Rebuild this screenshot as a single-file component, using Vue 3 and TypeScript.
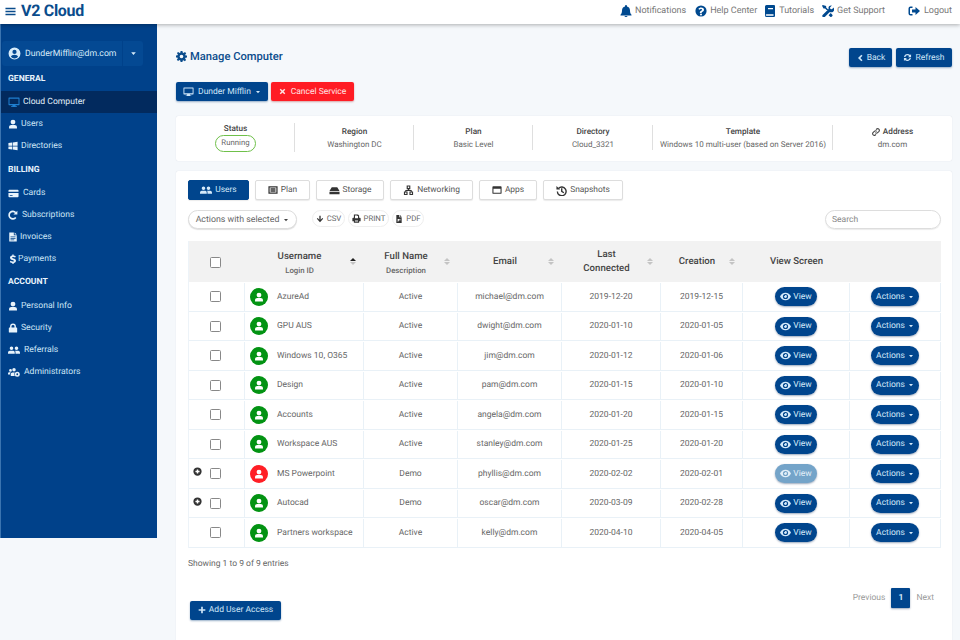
<script setup lang="ts">
import { h } from 'vue'
import type { FunctionalComponent } from 'vue'

const Ic: FunctionalComponent<{ n: string; s?: number }> = (p) =>
  h('svg', { width: p.s ?? 10, height: p.s ?? 10, viewBox: '0 0 24 24', fill: 'currentColor', style: 'flex:none' }, [
    h('use', { href: '#i-' + p.n }),
  ])

const nav = [
  { head: 'GENERAL', y: 'h1', items: [
    { t: 'Cloud Computer', i: 'desktop', s: 12, w: 15, active: true },
    { t: 'Users', i: 'user', s: 10, w: 13 },
    { t: 'Directories', i: 'windows', s: 10, w: 13 },
  ] },
  { head: 'BILLING', y: 'h2', items: [
    { t: 'Cards', i: 'card', s: 11, w: 15 },
    { t: 'Subscriptions', i: 'redo', s: 10, w: 14 },
    { t: 'Invoices', i: 'file', s: 10, w: 12 },
    { t: 'Payments', i: 'dollar', s: 10, w: 10 },
  ] },
  { head: 'ACCOUNT', y: 'h3', items: [
    { t: 'Personal Info', i: 'user', s: 10, w: 13 },
    { t: 'Security', i: 'lock', s: 10, w: 13 },
    { t: 'Referrals', i: 'users', s: 12, w: 16 },
    { t: 'Administrators', i: 'userscog', s: 12, w: 16 },
  ] },
]

const topLinks = [
  { t: 'Notifications', i: 'bell', s: 12 },
  { t: 'Help Center', i: 'question', s: 12 },
  { t: 'Tutorials', i: 'book', s: 12 },
  { t: 'Get Support', i: 'tools', s: 12 },
]

const info = [
  { l: 'Region', v: 'Washington DC' },
  { l: 'Plan', v: 'Basic Level' },
  { l: 'Directory', v: 'Cloud_3321' },
  { l: 'Template', v: 'Windows 10 multi-user (based on Server 2016)' },
]

const tabs = [
  { t: 'Users', i: 'users', w: 61, s: 12, on: true },
  { t: 'Plan', i: 'plan', w: 55, s: 10 },
  { t: 'Storage', i: 'hdd', w: 68, s: 11 },
  { t: 'Networking', i: 'network', w: 83, s: 11 },
  { t: 'Apps', i: 'window', w: 58, s: 10 },
  { t: 'Snapshots', i: 'history', w: 80, s: 11 },
]

const rows = [
  { n: 'AzureAd', d: 'Active', e: 'michael@dm.com', l: '2019-12-20', c: '2019-12-15' },
  { n: 'GPU AUS', d: 'Active', e: 'dwight@dm.com', l: '2020-01-10', c: '2020-01-05' },
  { n: 'Windows 10, O365', d: 'Active', e: 'jim@dm.com', l: '2020-01-12', c: '2020-01-06' },
  { n: 'Design', d: 'Active', e: 'pam@dm.com', l: '2020-01-15', c: '2020-01-10' },
  { n: 'Accounts', d: 'Active', e: 'angela@dm.com', l: '2020-01-20', c: '2020-01-15' },
  { n: 'Workspace AUS', d: 'Active', e: 'stanley@dm.com', l: '2020-01-25', c: '2020-01-20' },
  { n: 'MS Powerpoint', d: 'Demo', e: 'phyllis@dm.com', l: '2020-02-02', c: '2020-02-01', plus: true, off: true },
  { n: 'Autocad', d: 'Demo', e: 'oscar@dm.com', l: '2020-03-09', c: '2020-02-28', plus: true },
  { n: 'Partners workspace', d: 'Active', e: 'kelly@dm.com', l: '2020-04-10', c: '2020-04-05' },
]
</script>

<template>
  <div class="app">
    <svg class="sprite" aria-hidden="true">
      <symbol id="i-menu" viewBox="0 0 24 24"><path d="M1 4h22v3H1zM1 10.500h22v3H1zM1 17h22v3H1z" /></symbol>
      <symbol id="i-usercircle" viewBox="0 0 24 24"><path fill-rule="evenodd" d="M12 1a11 11 0 100 22 11 11 0 000-22zm0 4.200a3.900 3.900 0 110 7.800 3.900 3.900 0 010-7.800zM5.400 18.200c.8-2.800 3-4 6.600-4s5.800 1.200 6.600 4A8.900 8.900 0 0112 21a8.900 8.900 0 01-6.600-2.800z" /></symbol>
      <symbol id="i-caret" viewBox="0 0 24 24"><path d="M4 8h16l-8 9z" /></symbol>
      <symbol id="i-desktop" viewBox="0 0 24 24"><path fill-rule="evenodd" d="M2 3h20a1.500 1.500 0 011 1.500V17a1.500 1.500 0 01-1 1.500h-7l.5 2H18V22H6v-1.500h2.500l.5-2H2a1.500 1.500 0 01-1-1.500V4.500A1.500 1.500 0 012 3zm1 2.500V16h18V5.500z" /></symbol>
      <symbol id="i-user" viewBox="0 0 24 24"><path d="M12 1.500a5.800 5.800 0 110 11.600 5.800 5.800 0 010-11.600zM2.500 22.500v-2.700c0-3.200 2.500-5.300 5.300-5.300h8.400c2.800 0 5.300 2.100 5.300 5.300v2.700z" /></symbol>
      <symbol id="i-windows" viewBox="0 0 24 24"><path d="M1 5l9-1.300v7.800H1zM11.500 3.500L23 2v9.500H11.500zM1 13h9v7.300L1 19zM11.500 13H23v9l-11.500-1.600z" /></symbol>
      <symbol id="i-card" viewBox="0 0 24 24"><path d="M3 4h18a2 2 0 012 2v2H1V6a2 2 0 012-2zM1 11h22v7a2 2 0 01-2 2H3a2 2 0 01-2-2zm3 4v2h6v-2z" fill-rule="evenodd" /></symbol>
      <symbol id="i-redo" viewBox="0 0 24 24"><path d="M18.500 6.500A9 9 0 1018.700 18" fill="none" stroke="currentColor" stroke-width="4" /><path d="M22.500 1.500v9.500h-9.500z" /></symbol>
      <symbol id="i-file" viewBox="0 0 24 24"><path fill-rule="evenodd" d="M3 1h11v7h7v15H3zm13 0l5 5h-5zM6 11v1.500h12V11zm0 3.500V16h12v-1.500zM6 18v1.500h9V18z" /></symbol>
      <symbol id="i-dollar" viewBox="0 0 24 24"><path d="M10.500 1h3v2.600c2.300.3 4 1.100 5.300 2l-1.500 2.800C15.900 7.500 14.300 7 12.400 7c-1.800 0-2.700.6-2.700 1.500 0 1 1 1.400 3.400 2.100 3.600 1 6.100 2.300 6.100 5.600 0 2.800-2.100 4.700-5.700 5.200V24h-3v-2.500c-2.600-.2-4.700-1.200-6.200-2.400l1.700-2.800c1.600 1.200 3.500 1.900 5.300 1.900 2 0 3-.6 3-1.700s-1.100-1.600-3.700-2.300c-3.300-1-5.800-2.200-5.800-5.400 0-2.700 2.100-4.600 5.400-5.100z" /></symbol>
      <symbol id="i-lock" viewBox="0 0 24 24"><path fill-rule="evenodd" d="M12 1a7 7 0 017 7v3h1.500a1.500 1.500 0 011.500 1.500v9a1.500 1.500 0 01-1.500 1.500h-17A1.500 1.500 0 012 21.500v-9A1.500 1.500 0 013.500 11H5V8a7 7 0 017-7zm0 3.500A3.500 3.500 0 008.500 8v3h7V8A3.500 3.500 0 0012 4.500z" /></symbol>
      <symbol id="i-users" viewBox="0 0 24 24"><path d="M7 5a3.600 3.600 0 110 7.200A3.600 3.600 0 017 5zM17 5a3.600 3.600 0 110 7.200A3.600 3.600 0 0117 5zM0 19.500v-2.200c0-2 1.600-3.700 3.500-3.700h7c1.900 0 3 1.700 3 3.700v2.200zM15 19.500v-2.400c0-1.300-.3-2.500-1-3.500h6.500c2 0 3.500 1.700 3.500 3.700v2.200z" /></symbol>
      <symbol id="i-userscog" viewBox="0 0 24 24"><path d="M5 6a2.800 2.800 0 110 5.600A2.800 2.800 0 015 6zM12 4a3.500 3.500 0 110 7 3.500 3.500 0 010-7zM0 17v-1.800c0-1.600 1.300-2.700 3-2.700h2.500c-.8.900-1.300 2-1.300 3.200V17zM5.500 20v-3.500c0-2 1.500-3.500 3.500-3.500h4.600a6 6 0 000 7z" /><circle cx="18.500" cy="16.500" r="5" /><circle cx="18.500" cy="16.500" r="1.800" fill="#00418a" /></symbol>
      <symbol id="i-bell" viewBox="0 0 24 24"><path d="M12 0a2 2 0 012 2v1.200c3.500.8 6 3.900 6 7.800 0 5 1.400 6.600 3 8.300V21H1v-1.700c1.600-1.700 3-3.300 3-8.300 0-3.900 2.500-7 6-7.800V2a2 2 0 012-2zM9 22h6a3 2 0 01-6 0z" /></symbol>
      <symbol id="i-question" viewBox="0 0 24 24"><path fill-rule="evenodd" d="M12 .8a11.200 11.200 0 110 22.400A11.200 11.200 0 0112 .8zM12.300 5c-2.600 0-4.300 1.100-5.500 3l2.200 1.600c.7-1 1.500-1.600 3-1.600 1.200 0 2.200.6 2.200 1.600 0 1-.8 1.400-1.900 2-1.300.7-2.600 1.500-2.600 3.500v.9h3.600v-.6c0-.8.600-1.200 1.700-1.800 1.600-.9 3-1.900 3-4C18 6.800 15.200 5 12.300 5zM12 17a2 2 0 100 4 2 2 0 000-4z" /></symbol>
      <symbol id="i-book" viewBox="0 0 24 24"><path fill-rule="evenodd" d="M5 0h15a2 2 0 012 2v20a2 2 0 01-2 2H5a3 3 0 01-3-3V3a3 3 0 013-3zm3 6v2.500h10V6zM5 18.500A1.500 1.500 0 005 21.500h14v-3z" /></symbol>
      <symbol id="i-tools" viewBox="0 0 24 24"><path d="M1.500 0L0 1.500l3 5.500h3.200l5 5 2.100-2.100-5-5V1.800zM23.500 5l-3.700 3.700-3-.8-.8-3L19.700 1c-3-.9-6.300.9-6.700 4.100-.1 1 0 1.900.3 2.700L1.200 19.900a3 3 0 004.200 4.200l9.600-9.600 2.600-.2c.9.300 1.800.4 2.800.2 3-.6 4.700-3.900 3.400-7.500zM17.500 16.200l-4.300 4.300 2.700 2.700a2.700 2.700 0 003.800 0l.5-.5a2.700 2.700 0 000-3.800z" /></symbol>
      <symbol id="i-signout" viewBox="0 0 24 24"><path d="M9 3H5a4 4 0 00-4 4v10a4 4 0 004 4h4v-3H5a1 1 0 01-1-1V7a1 1 0 011-1h4z" /><path d="M15 4l9 8-9 8v-5H8V9h7z" /></symbol>
      <symbol id="i-chevron" viewBox="0 0 24 24"><path d="M16 2l3.500 3.500L13 12l6.500 6.500L16 22 6 12z" /></symbol>
      <symbol id="i-sync" viewBox="0 0 24 24"><path d="M12 2.500c2.700 0 5.100 1.100 6.900 2.900L21.500 3v8h-8l3-3a6 6 0 00-10.200 2.500H2.700A9.600 9.600 0 0112 2.500zM2.500 13h8l-3 3a6 6 0 0010.200-2.500h3.600A9.600 9.600 0 015.100 18.600L2.500 21z" /></symbol>
      <symbol id="i-cog" viewBox="0 0 24 24"><path fill-rule="evenodd" d="M10 0h4l.7 3.300 1.900.8L19.500 2l2.800 2.800-2.100 2.900.8 1.900L24 10v4l-3.300.7-.8 1.900 2.100 2.900-2.800 2.800-2.900-2.100-1.900.8L14 24h-4l-.7-3.300-1.900-.8-2.900 2.100-2.800-2.800 2.100-2.900-.8-1.900L0 14v-4l3.300-.7.8-1.900L2 4.500 4.800 2l2.900 2.100 1.900-.8zM12 8a4 4 0 100 8 4 4 0 000-8z" /></symbol>
      <symbol id="i-times" viewBox="0 0 24 24"><path d="M6 2.500l6 6 6-6 3.500 3.500-6 6 6 6-3.500 3.500-6-6-6 6L2.500 18l6-6-6-6z" /></symbol>
      <symbol id="i-link" viewBox="0 0 24 24"><path d="M10 14a5 5 0 007 0l4-4a5 5 0 00-7-7l-2 2M14 10a5 5 0 00-7 0l-4 4a5 5 0 007 7l2-2" fill="none" stroke="currentColor" stroke-width="3.200" /></symbol>
      <symbol id="i-plan" viewBox="0 0 24 24"><path fill-rule="evenodd" d="M1 3h22v18H1zm3 3v12h16V6zm2 2h12v2H6zm0 3h12v2H6zm0 3h12v2H6z" /></symbol>
      <symbol id="i-hdd" viewBox="0 0 24 24"><path d="M6 5h12l5 8H1zM1 14.500h22V20H1z" /></symbol>
      <symbol id="i-network" viewBox="0 0 24 24"><path fill-rule="evenodd" d="M8 1h8v8h-2.500v2H19v3h3v8h-8v-8h3v-1H7v1h3v8H2v-8h3v-3h5.500V9H8zm2.500 2.500v3h3v-3zM4.500 16.500v3h3v-3zm12 0v3h3v-3z" /></symbol>
      <symbol id="i-window" viewBox="0 0 24 24"><path fill-rule="evenodd" d="M3 3h18a2 2 0 012 2v14a2 2 0 01-2 2H3a2 2 0 01-2-2V5a2 2 0 012-2zm.5 6v9.500h17V9z" /></symbol>
      <symbol id="i-history" viewBox="0 0 24 24"><path d="M5.500 7.500A9.500 9.500 0 113 14" fill="none" stroke="currentColor" stroke-width="3" /><path d="M1 2l8 8H1z" /><path d="M11 7h3v6l4 3-1.700 2.200L11 14.500z" /></symbol>
      <symbol id="i-down" viewBox="0 0 24 24"><path d="M10 2h4v12l5-5 2.500 2.500L12 22l-9.500-10.500L5 9l5 5z" /></symbol>
      <symbol id="i-print" viewBox="0 0 24 24"><path fill-rule="evenodd" d="M5 1h11l3 3v6h2a2 2 0 012 2v7h-4v4H5v-4H1v-7a2 2 0 012-2h2zm3 3v7h8V5h-2V4zm0 13v3h8v-3z" /></symbol>
      <symbol id="i-pdf" viewBox="0 0 24 24"><path fill-rule="evenodd" d="M4 0h9v7h7v17H4zm11 0l5 5h-5zM8 12v8h2v-3h1.500a2.500 2.500 0 000-5zm5 3a2 2 0 014 0v1h-4z" /></symbol>
      <symbol id="i-eye" viewBox="0 0 24 24"><path fill-rule="evenodd" d="M12 4c5.400 0 9.800 3.300 12 8-2.200 4.700-6.600 8-12 8S2.200 16.700 0 12c2.200-4.700 6.600-8 12-8zm0 2.300a5.700 5.700 0 100 11.400 5.700 5.700 0 000-11.400zm0 2.500a3.200 3.200 0 11-3.200 3.200c0-.4.100-.8.200-1.100a1.800 1.800 0 002.200-2c.2-.1.500-.1.800-.1z" /></symbol>
      <symbol id="i-plus" viewBox="0 0 24 24"><path d="M9.500 2h5v7.500H22v5h-7.500V22h-5v-7.500H2v-5h7.500z" /></symbol>
      <symbol id="i-pluscircle" viewBox="0 0 24 24"><path fill-rule="evenodd" d="M12 1a11 11 0 110 22 11 11 0 010-22zm-2 5.500V10H6.500v4H10v3.500h4V14h3.500v-4H14V6.500z" /></symbol>
    </svg>

    <header class="topbar">
      <div class="brand">
        <Ic n="menu" :s="11" class="burger" />
        <span class="logo">V2 Cloud</span>
      </div>
      <nav class="toplinks">
        <a v-for="l in topLinks" :key="l.t" class="toplink">
          <Ic :n="l.i" :s="l.s" />
          <span>{{ l.t }}</span>
        </a>
        <a class="toplink logout"><Ic n="signout" :s="12" /><span>Logout</span></a>
      </nav>
    </header>

    <div class="body">
      <aside class="sidebar">
        <div class="account">
          <div class="account-main"><Ic n="usercircle" :s="13" /><span>DunderMifflin@dm.com</span></div>
          <div class="account-caret"><Ic n="caret" :s="7" /></div>
        </div>
        <section v-for="sec in nav" :key="sec.head">
          <h4 class="nav-head" :class="sec.y">{{ sec.head }}</h4>
          <a v-for="it in sec.items" :key="it.t" class="nav-item" :class="{ active: it.active }">
            <span class="nav-ic" :style="{ width: it.w + 'px' }"><Ic :n="it.i" :s="it.s" /></span>
            <span>{{ it.t }}</span>
          </a>
        </section>
      </aside>

      <main class="main">
        <div class="title-row">
          <h1 class="title"><Ic n="cog" :s="11" /><span>Manage Computer</span></h1>
          <div class="title-actions">
            <button class="btn"><Ic n="chevron" :s="8" />Back</button>
            <button class="btn"><Ic n="sync" :s="9" />Refresh</button>
          </div>
        </div>

        <div class="service-row">
          <button class="btn wide"><Ic n="desktop" :s="11" />Dunder Mifflin<Ic n="caret" :s="6" /></button>
          <button class="btn danger"><Ic n="times" :s="7" />Cancel Service</button>
        </div>

        <div class="info">
          <div class="info-cell status">
            <div class="info-label">Status</div>
            <div class="pill">Running</div>
          </div>
          <div v-for="c in info" :key="c.l" class="info-cell">
            <div class="info-label">{{ c.l }}</div>
            <div class="info-value">{{ c.v }}</div>
          </div>
          <div class="info-cell">
            <div class="info-label"><Ic n="link" :s="8" /> Address</div>
            <div class="info-value">dm.com</div>
          </div>
        </div>

        <div class="card">
          <div class="tabs">
            <button v-for="t in tabs" :key="t.t" class="tab" :class="{ on: t.on }" :style="{ width: t.w + 'px' }">
              <Ic :n="t.i" :s="t.s" />{{ t.t }}
            </button>
          </div>

          <div class="tools">
            <button class="select">Actions with selected<Ic n="caret" :s="6" /></button>
            <div class="exports">
              <button class="export csv"><Ic n="down" :s="8" />CSV</button>
              <button class="export print"><Ic n="print" :s="9" />PRINT</button>
              <button class="export pdf"><Ic n="pdf" :s="8" />PDF</button>
            </div>
            <div class="search">Search</div>
          </div>

          <div class="table">
            <div class="row head">
              <div class="cell check"><span class="slot"></span><span class="box"></span></div>
              <div class="cell hcell">
                <b>Username</b><small>Login ID</small>
                <span class="sort"><i class="up dark"></i><i class="dn"></i></span>
              </div>
              <div class="cell hcell">
                <b>Full Name</b><small>Description</small>
                <span class="sort"><i class="up"></i><i class="dn"></i></span>
              </div>
              <div class="cell hcell">
                <b>Email</b>
                <span class="sort"><i class="up"></i><i class="dn"></i></span>
              </div>
              <div class="cell hcell">
                <b>Last<br />Connected</b>
                <span class="sort"><i class="up"></i><i class="dn"></i></span>
              </div>
              <div class="cell hcell">
                <b>Creation</b>
                <span class="sort"><i class="up"></i><i class="dn"></i></span>
              </div>
              <div class="cell hcell nosort"><b>View Screen</b></div>
              <div class="cell"></div>
            </div>
            <div v-for="r in rows" :key="r.n" class="row">
              <div class="cell check">
                <span class="slot"><Ic v-if="r.plus" n="pluscircle" :s="9" /></span>
                <span class="box"></span>
              </div>
              <div class="cell name">
                <span class="avatar" :class="{ red: r.off }"><Ic n="user" :s="10" /></span>
                <span>{{ r.n }}</span>
              </div>
              <div class="cell">{{ r.d }}</div>
              <div class="cell">{{ r.e }}</div>
              <div class="cell">{{ r.l }}</div>
              <div class="cell">{{ r.c }}</div>
              <div class="cell"><button class="round view" :class="{ off: r.off }"><Ic n="eye" :s="11" />View</button></div>
              <div class="cell"><button class="round act">Actions<Ic n="caret" :s="6" /></button></div>
            </div>
          </div>

          <div class="showing">Showing 1 to 9 of 9 entries</div>

          <div class="foot">
            <button class="btn add"><Ic n="plus" :s="8" />Add User Access</button>
            <div class="pager">
              <span>Previous</span>
              <span class="page">1</span>
              <span>Next</span>
            </div>
          </div>
        </div>
      </main>
    </div>
  </div>
</template>

<style>
html, body { margin: 0; background: #f5f8fb; }
</style>

<style scoped>
.app {
  width: 960px;
  height: 640px;
  overflow: hidden;
  display: flex;
  flex-direction: column;
  background: #f5f8fb;
  font-family: Roboto, "Liberation Sans", sans-serif;
  font-size: 8.500px;
  color: #666;
  text-rendering: geometricPrecision;
}
.sprite { display: none; }
button { font-family: inherit; border: 0; padding: 0; cursor: pointer; text-rendering: geometricPrecision; }

.topbar {
  height: 24px;
  flex: none;
  box-sizing: border-box;
  background: #fff;
  box-shadow: 0 1px 4px rgba(0, 0, 0, 0.3);
  display: flex;
  align-items: center;
  justify-content: space-between;
  padding: 0 8px 3px 5px;
  position: relative;
  z-index: 2;
}
.brand { display: flex; align-items: center; gap: 5px; color: #0a4c8c; padding-top: 1px; }
.logo { font-size: 16px; font-weight: 700; letter-spacing: -0.3px; line-height: 20px; color: #0a4c8c; }
.toplinks { display: flex; align-items: center; gap: 9px; }
.toplink { display: flex; align-items: center; gap: 3px; color: #00498f; }
.toplink:nth-child(3) { margin-left: -2px; }
.toplink:nth-child(4) { margin-left: -1px; }
.toplink span { color: #777; font-size: 9px; }
.logout { margin-left: 14px; gap: 4px; }

.body { flex: 1; display: flex; min-height: 0; align-items: flex-start; }
.sidebar {
  width: 157px;
  height: 514px;
  flex: none;
  box-sizing: border-box;
  background: #00418a;
  color: #cde6f7;
  padding-top: 17px;
  border-left: 1px solid #3b74b0;
}
.account { display: flex; width: 141px; height: 25px; margin-left: 1px; background: #044993; border-radius: 3px; color: #d8ecfa; }
.account-main { display: flex; align-items: center; gap: 4px; flex: 1; padding-left: 6px; font-size: 8.700px; }
.account-caret { width: 20px; display: flex; align-items: center; justify-content: center; border-left: 1px solid #00418a; }
.nav-head { margin: 0; padding-left: 7px; font-size: 8.600px; font-weight: 700; color: #e9f4fc; line-height: 12px; }
.h1 { margin-top: 7px; padding-bottom: 6px; }
.h2 { margin-top: 7px; padding-bottom: 6px; }
.h3 { margin-top: 6px; padding-bottom: 7px; }
.nav-item { display: flex; align-items: center; height: 22px; padding-left: 7px; font-size: 8.600px; }
.nav-ic { display: flex; align-items: center; color: #e8f3fb; }
.nav-item.active { background: #022a5e; color: #e2f0fa; }
.nav-item.active .nav-ic { color: #1f7fd0; }

.main { flex: 1; min-width: 0; height: 100%; display: flex; flex-direction: column; padding: 24px 8px 0 19px; box-sizing: border-box; }
.title-row { display: flex; align-items: center; justify-content: space-between; height: 19px; }
.title { margin: 0 0 2px; display: flex; align-items: center; gap: 3px; font-size: 11.200px; font-weight: 500; color: #0a4c8c; }
.title-actions { display: flex; gap: 4px; }
.btn {
  height: 19px;
  display: inline-flex;
  align-items: center;
  justify-content: center;
  gap: 3px;
  background: #00458d;
  color: #cfe6f8;
  border-radius: 2px;
  font-size: 8.500px;
  box-shadow: 0 1px 2px rgba(0, 60, 120, 0.4);
}
.title-actions .btn:first-child { width: 43px; }
.title-actions .btn:last-child { width: 56px; }
.service-row { display: flex; gap: 3px; margin-top: 15px; }
.wide { width: 92px; gap: 4px; }
.danger { width: 83px; background: #ff1c24; color: #ffe3e3; gap: 5px; box-shadow: 0 1px 2px rgba(160, 0, 0, 0.35); }

.info {
  display: grid;
  grid-template-columns: 119px 119px 119px 120px 180px 119px;
  height: 45px;
  margin-top: 15px;
  background: #fff;
  border-radius: 2px;
  box-shadow: 0 0 1px rgba(0, 40, 80, 0.18);
}
.info-cell { display: flex; flex-direction: column; align-items: center; justify-content: center; position: relative; gap: 3px; padding-bottom: 1px; box-sizing: border-box; }
.info-cell:not(:last-child)::after { content: ""; position: absolute; right: 0; top: 9px; height: 25px; width: 1px; background: #dfdfdf; }
.info-label { color: #444; font-size: 8.200px; font-weight: 500; line-height: 10px; display: flex; align-items: center; gap: 3px; }
.info-value { color: #666; font-size: 8px; line-height: 10px; white-space: nowrap; }
.status { gap: 1px; padding-bottom: 1.500px; }
.status::after { top: 7px !important; height: 29px !important; }
.pill { border: 1.300px solid #6fc04a; border-radius: 9px; width: 41px; height: 17px; box-sizing: border-box; text-align: center; line-height: 14.500px; font-size: 7.800px; color: #666; }

.card {
  flex: 1;
  margin-top: 10px;
  background: #fff;
  border-radius: 2px 2px 0 0;
  box-shadow: 0 0 1px rgba(0, 40, 80, 0.18);
  padding: 9px 11px 0 12px;
  display: flex;
  flex-direction: column;
}
.tabs { display: flex; gap: 6px; }
.tab {
  height: 20px;
  display: inline-flex;
  align-items: center;
  justify-content: center;
  gap: 3px;
  background: #fff;
  color: #555;
  font-size: 8.400px;
  border: 1px solid #ddd;
  border-radius: 2px;
  box-shadow: 0 1px 1px rgba(0, 0, 0, 0.08);
  box-sizing: border-box;
}
.tab svg { color: #333; }
.tab.on { background: #00458d; color: #d5eafa; border-color: #00458d; }
.tab.on svg { color: #d5eafa; }

.tools { display: flex; align-items: center; margin-top: 10px; height: 19px; }
.select {
  width: 109px;
  height: 19px;
  background: #fff;
  border: 1px solid #ddd;
  border-radius: 10px;
  box-shadow: 0 1px 1px rgba(0, 0, 0, 0.12);
  color: #666;
  font-size: 8.800px;
  display: inline-flex;
  align-items: center;
  justify-content: center;
  gap: 4px;
  box-sizing: border-box;
}
.select svg { color: #444; }
.exports { display: flex; gap: 3px; margin-left: 15px; margin-top: -2px; }
.export {
  height: 17px;
  background: #fff;
  border: 1px solid #eee;
  border-radius: 9px;
  color: #666;
  font-size: 7.800px;
  display: inline-flex;
  align-items: center;
  justify-content: center;
  gap: 3px;
  box-sizing: border-box;
}
.export svg { color: #333; }
.csv { width: 33px; }
.print { width: 41px; }
.pdf { width: 32px; }
.search {
  margin-left: auto;
  width: 116px;
  height: 19px;
  box-sizing: border-box;
  border: 1px solid #ddd;
  border-radius: 10px;
  box-shadow: 0 1px 1px rgba(0, 0, 0, 0.08);
  padding-left: 6px;
  line-height: 18px;
  color: #888;
  font-size: 8.500px;
}

.table { margin-top: 12px; border-left: 1px solid #edf3f8; }
.row {
  display: grid;
  grid-template-columns: 56px 119px 94px 104px 99px 82px 107px 91px;
  height: 29.500px;
  padding-top: 1px;
  border-bottom: 1px solid #e9f1f7;
  box-sizing: border-box;
}
.row.head { height: 41px; background: #f2f2f2; border-bottom: 0; }
.cell {
  display: flex;
  align-items: center;
  justify-content: center;
  text-align: center;
  border-right: 1px solid #e9f1f7;
  position: relative;
  color: #666;
  font-size: 8.500px;
}
.head .cell { border-right: 0; }
.check { justify-content: flex-start; padding-left: 4px; }
.slot { width: 10px; margin-right: 7px; display: flex; color: #333; margin-top: -4px; }
.box { width: 11px; height: 11px; box-sizing: border-box; border: 1px solid #888; border-radius: 1.500px; background: #fff; }
.hcell { flex-direction: column; padding-right: 10px; box-sizing: border-box; gap: 2px; }
.hcell.nosort { padding-right: 0; }
.hcell b { font-weight: 500; font-size: 9.600px; color: #444; line-height: 14px; }
.hcell small { font-size: 7.800px; color: #666; font-weight: 500; }
.sort { position: absolute; right: 8px; top: 50%; margin-top: -4px; display: flex; flex-direction: column; gap: 1px; }
.sort i { display: block; width: 0; height: 0; border-left: 3px solid transparent; border-right: 3px solid transparent; }
.sort .up { border-bottom: 3px solid #c4c4c4; }
.sort .dn { border-top: 3px solid #c4c4c4; }
.sort .dark { border-bottom-color: #222; }
.name { justify-content: flex-start; padding-left: 5px; gap: 9px; }
.avatar { width: 18px; height: 18px; border-radius: 50%; background: #039313; color: #fff; display: flex; align-items: center; justify-content: center; flex: none; }
.avatar.red { background: #ff1f26; }
.round {
  height: 19px;
  border-radius: 10px;
  background: #00458d;
  color: #d5eafa;
  font-size: 8.500px;
  display: inline-flex;
  align-items: center;
  justify-content: center;
  gap: 2px;
  box-shadow: 0 1px 2px rgba(0, 40, 90, 0.4);
}
.view { width: 42px; }
.view.off { background: #74a4c9; color: #e2eff8; }
.act { width: 48px; gap: 3px; }

.showing { margin-top: 11px; color: #666; font-size: 8.500px; line-height: 11px; }
.foot { display: flex; justify-content: space-between; align-items: flex-start; margin-top: 18.500px; }
.add { width: 91px; margin: 12.500px 0 0 2px; }
.pager { display: flex; align-items: center; gap: 6px; color: #999; font-size: 8.500px; margin-right: 7px; }
.page { width: 19px; height: 20px; border-radius: 1px; background: #00458d; color: #d5eafa; display: flex; align-items: center; justify-content: center; font-weight: 700; box-shadow: 0 1px 2px rgba(0, 40, 90, 0.4); }
</style>
